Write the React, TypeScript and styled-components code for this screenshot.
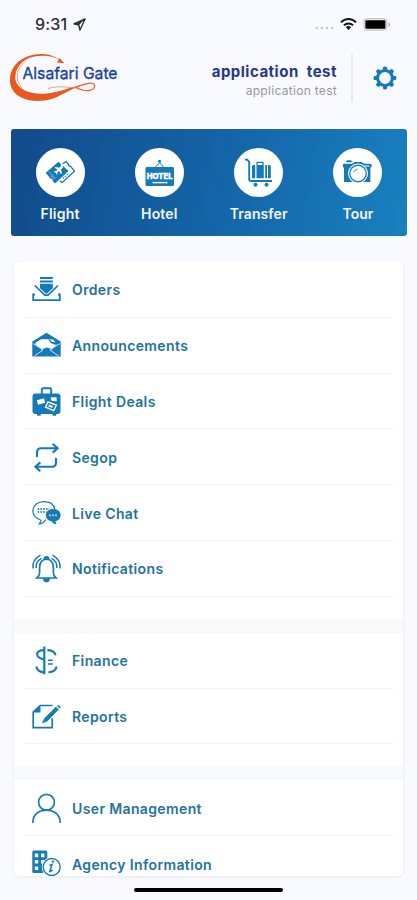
import React from "react";
import styled, { createGlobalStyle } from "styled-components";

const BLUE = "#147ab9";

const GlobalStyle = createGlobalStyle`
  * { box-sizing: border-box; }
  body { margin: 0; background: #f9faff; font-family: Inter, "Liberation Sans", sans-serif; }
`;

const Screen = styled.div`
  width: 417px;
  height: 900px;
  overflow: hidden;
  display: flex;
  flex-direction: column;
  background: #f9faff;
`;

const StatusBar = styled.div`
  height: 48px;
  flex: none;
  display: flex;
  align-items: center;
  justify-content: space-between;
  padding: 0 26px 0 35px;
`;

const Clock = styled.div`
  display: flex;
  align-items: center;
  gap: 6px;
  font-size: 16px;
  font-weight: 450;
  letter-spacing: 0.15px;
  color: #2b2d30;
`;

const StatusIcons = styled.div`
  display: flex;
  align-items: center;
  gap: 6px;
`;

const Header = styled.header`
  height: 80px;
  flex: none;
  display: flex;
  align-items: flex-start;
  padding: 5px 20px 0 9px;
`;

const Account = styled.div`
  flex: 1;
  padding-top: 8px;
  text-align: right;
  white-space: pre;
`;

const AccountName = styled.div`
  font-size: 15px;
  line-height: 21px;
  font-weight: 700;
  letter-spacing: 0.5px;
  color: #25388c;
`;

const AccountRole = styled.div`
  font-size: 12px;
  line-height: 18px;
  letter-spacing: 0.3px;
  color: #96989d;
`;

const HeaderRule = styled.div`
  width: 2px;
  height: 48px;
  margin: 1px 20px 0 14px;
  background: #e9eaee;
`;

const SettingsButton = styled.button`
  border: 0;
  padding: 0;
  margin-top: 13px;
  width: 24px;
  height: 24px;
  background: none;
`;

const Services = styled.nav`
  height: 107px;
  flex: none;
  margin: 1px 10px 0 11px;
  padding-top: 19px;
  display: grid;
  grid-template-columns: repeat(4, 99.3px);
  justify-content: center;
  border-radius: 3px;
  background: linear-gradient(100deg, #124b8b 0%, #1362a5 48%, #1980c0 100%);
`;

const Service = styled.div`
  display: flex;
  flex-direction: column;
  align-items: center;
`;

const ServiceDisc = styled.div`
  width: 49px;
  height: 49px;
  border-radius: 50%;
  background: #fff;
  display: flex;
  align-items: center;
  justify-content: center;
`;

const ServiceLabel = styled.div<{ $spacing: number }>`
  margin-top: 7px;
  font-size: 14px;
  line-height: 20px;
  font-weight: 600;
  letter-spacing: ${(p) => p.$spacing}px;
  color: #f4f8ff;
`;

const MenuList = styled.main`
  height: 614px;
  flex: none;
  margin: 26px 14px 0;
  overflow: hidden;
  border-radius: 3px 3px 6px 6px;
  box-shadow: 0 1px 3px rgba(40, 50, 70, 0.09);
  display: flex;
  flex-direction: column;
  gap: 14px;
  background: #f8f9fc;
`;

const MenuCard = styled.section`
  flex: none;
  padding: 0 10px 22px;
  background: #fff;
`;

const MenuRow = styled.div`
  height: 55.8px;
  padding: 1px 0 0 8px;
  display: flex;
  align-items: center;
  gap: 11px;
  border-bottom: 1px solid #f1f2f4;
`;

const MenuLabel = styled.div`
  padding-top: 1px;
  font-size: 14px;
  line-height: 20px;
  font-weight: 600;
  letter-spacing: 0.37px;
  color: #2472a0;
  white-space: nowrap;
`;

const HomeIndicator = styled.div`
  width: 149px;
  height: 4px;
  flex: none;
  margin: 12px auto 0;
  border-radius: 2px;
  background: #000;
`;

const LogoSvg = styled.svg`
  flex: none;
  overflow: visible;
`;

const LogoName = styled.text`
  font: 16.5px Inter, sans-serif;
  fill: #19429b;
  stroke: #19429b;
  stroke-width: 0.35px;
`;

const HotelSign = styled.text`
  font: 800 8px Inter, sans-serif;
  fill: #fff;
  stroke: #fff;
  stroke-width: 0.4px;
`;

const Logo = () => (
  <LogoSvg width="116" height="50" viewBox="0 0 116 50">
    <path
      d="M51 7C43 0 28-1 17 4C5 9-1 20 1.500 32C5 45 20 49.500 36 47.500C50 45.500 58 37 75 31.500C60 34 52 39 38 40.500C22 42 9 37 6.500 27C5 17 12 8 20 5C30 1.500 43 2 51 7Z"
      fill="#e8591c"
    />
    <path d="M66 35C75 30.500 84 28.500 85.500 32C86.500 36 80 41 67 34.500" fill="none" stroke="#e8662c" strokeWidth="1.300" />
    <path d="M13 35C5 26 8 14 17 8" fill="none" stroke="#f08450" strokeWidth=".7" />
    <path d="M39 35.500C51 32 61 35 70 35" fill="none" stroke="#ee8a5b" strokeWidth=".8" />
    <path d="m50.500 5 5 5.200-7.500-.6z" fill="#e8591c" />
    <LogoName x="13.5" y="26" textLength="95" lengthAdjust="spacingAndGlyphs">
      Alsafari Gate
    </LogoName>
  </LogoSvg>
);

const LocationArrow = () => (
  <svg width="13" height="13" viewBox="0 0 14 14">
    <path d="M13 1 1 6.300l5.200 1.200L7.500 13Z" fill="none" stroke="#2b2d30" strokeWidth="1.500" strokeLinejoin="round" />
    <path d="M1.500 6.300 12 2 6.500 7.500Z" fill="#2b2d30" />
  </svg>
);

const SignalDots = () => (
  <svg width="19" height="16" viewBox="0 0 19 16" fill="#c6c8cd">
    {[1.8, 7, 12, 17.2].map((x) => (
      <circle key={x} cx={x} cy="12" r="1.3" />
    ))}
  </svg>
);

const Wifi = () => (
  <svg width="17" height="14" viewBox="0 0 17 14" fill="none" stroke="#16181b" strokeWidth="2">
    <path d="M1 5.400C5.200 1 11.800 1 16 5.400M3.900 8.400C6.600 5.700 10.400 5.700 13.100 8.400" />
    <path d="m8.500 13-2.700-2.700c1.500-1.600 3.900-1.600 5.400 0Z" fill="#16181b" stroke="none" />
  </svg>
);

const Battery = () => (
  <svg width="28" height="13" viewBox="0 0 28 13">
    <rect x=".9" y=".7" width="23" height="11.600" rx="2.800" fill="#e6e7e9" stroke="#c2c3c5" strokeWidth="1" />
    <rect x="2.400" y="2.200" width="20" height="8.600" rx="1" />
    <path d="M25.500 4.200c2.100.7 2.100 3.900 0 4.600Z" fill="#aaacae" />
  </svg>
);

const Gear = () => (
  <svg width="24" height="24" viewBox="0 0 24 24" fill={BLUE}>
    {[0, 45, 90, 135, 180, 225, 270, 315].map((a) => (
      <path key={a} d="M9.700 5.500 10 1.500Q10.200.6 12 .6t2 .9l.3 4Z" transform={`rotate(${a} 12 12)`} />
    ))}
    <circle cx="12" cy="12" r="7.400" fill="none" stroke={BLUE} strokeWidth="3" />
  </svg>
);

const FlightIcon = () => (
  <svg width="31" height="31" viewBox="0 0 31 31">
    <path d="m17.500 6.800 3.700-2.200 2.300 2.600-.1 1.600 1.700.1 4.500 5.100L17 25.700l-2-1.900" fill="none" stroke={BLUE} strokeWidth="1.300" />
    <path d="m13.500 4.700 2.500 2.600 0 1.700 2 .1 5.500 5L10 26.500l-2.500-2.700.1-2-2-.1-4.900-6Z" fill={BLUE} />
    <path
      d="M17.700 9.200c-.8-.7-1.700-.3-2.500.6l-1.100 1-3.600-.9-.9.8 2.900 1.900-1.600 1.700-1.500-.2-.6.6 1.900 1.100 1.100 1.900.7-.6-.2-1.500 1.800-1.500 1.800 2.900.9-.8-.8-3.700 1.100-1c.8-.8 1.200-1.600.6-2.300Z"
      fill="#fff"
    />
    <path d="m4.200 14.700 6.500 7M6.200 18.800l2.300 2.500" stroke="#d5e7f3" strokeWidth=".9" strokeDasharray="1.500 1" />
    <path d="m18 21.500 6-5.300" stroke={BLUE} strokeWidth="1.100" strokeDasharray="1.500 1" />
  </svg>
);

const HotelIcon = () => (
  <svg width="31" height="31" viewBox="0 0 31 31">
    <path d="m11.500 10 4-4.500 4 4.500" fill="none" stroke={BLUE} strokeWidth="1" />
    <circle cx="15.500" cy="4.200" r="1.500" fill={BLUE} />
    <rect x="1.500" y="10" width="28.500" height="19" rx="1.300" fill={BLUE} />
    <HotelSign x="2.700" y="22.200" textLength="26" lengthAdjust="spacingAndGlyphs">
      HOTEL
    </HotelSign>
    <path d="M8.500 25.600h15" stroke="#fff" strokeWidth="1.400" />
  </svg>
);

const TransferIcon = () => (
  <svg width="31" height="31" viewBox="0 0 31 31">
    <path d="M2 2.600h2.300L6.200 5v17.500q0 1.500 1.500 1.500H29" fill="none" stroke={BLUE} strokeWidth="1.900" />
    <path d="M14 8V5.400h6V8" fill="none" stroke={BLUE} strokeWidth="1.200" />
    <path d="M9 9.500Q9 8 10.500 8h1.700v13.300H9ZM13.500 8h7.300v13.300h-7.300ZM22.200 8h1.800v13.300h-1.800ZM25 8h1q1.800 0 1.800 1.500v11.800H25Z" fill={BLUE} />
    <circle cx="12.500" cy="27.700" r="2" fill={BLUE} />
    <circle cx="23.500" cy="27.700" r="2" fill={BLUE} />
  </svg>
);

const TourIcon = () => (
  <svg width="31" height="31" viewBox="0 0 31 31">
    <path d="M4.500 4.200q0-1 1.300-1h2.500q1.400 0 1.400 1v1H4.500Z" fill={BLUE} />
    <path d="M2 6.800h8.500l2-1.800h7l3 1.800h5.700q1.500 0 1.500 1.500v1.500l-1.300 1V25H2V11L.8 9.500v-2Z" fill={BLUE} />
    <circle cx="16" cy="16.500" r="10" fill="#fff" />
    <circle cx="16" cy="16.500" r="8.900" fill={BLUE} />
    <circle cx="16" cy="16.500" r="7.600" fill="#fff" />
    <path d="M11.500 15.500q1-3 4.200-3.500" fill="none" stroke={BLUE} strokeWidth=".8" />
    <path d="M22.500 9h5" stroke="#fff" strokeWidth="1" />
  </svg>
);

const RowSvg = styled.svg`
  width: 29px;
  height: 29px;
  flex: none;
  overflow: visible;
  fill: none;
  stroke: ${BLUE};
  stroke-width: 1.7px;
`;

const RowIcon = ({ children }: { children: React.ReactNode }) => <RowSvg viewBox="0 0 29 29">{children}</RowSvg>;

const OrdersIcon = () => (
  <RowIcon>
    <path d="M8 3h12.800M8 6.500h12.800" strokeWidth="2" />
    <path d="M8 8.700h12.800v4.500L14.400 19 8 13.200Z" fill={BLUE} stroke="none" />
    <path d="m2.800 10.500 10 9.700h3.200l10-9.700" />
    <path d="M3 19.500H1.200v5.600h26.600v-5.600H26" strokeWidth="1.800" />
  </RowIcon>
);

const AnnouncementsIcon = () => (
  <RowIcon>
    <path d="M.3 12V10.500L14.500 1.800l14.200 8.700V25.500H.3Z" fill={BLUE} stroke="none" />
    <path d="m3.500 11.800 5.500-3.600h7.500l2.200 3.800 4.300 1.800 1.800-.2-5.300 4.400-4.500-1.500L10 18.300 3.500 13.500Z" fill="#fff" stroke="none" />
    <path d="m17.500 8.200 3.500.2 2.500 2.800-3.500-.2Z" fill="#fff" stroke="none" />
    <path d="M1 12.500 11 19l-8.500 6M28 12.500 18 19l8.500 6" stroke="#fff" strokeWidth=".8" />
  </RowIcon>
);

const DealsIcon = () => (
  <RowIcon>
    <path d="M9.800 7V2.700q0-1.500 1.500-1.500h6.400q1.500 0 1.500 1.500V7" strokeWidth="1.900" />
    <rect x=".5" y="6.500" width="28" height="20.500" rx="3" fill={BLUE} stroke="none" />
    <path d="M4.500 26h4.200v2.800H5.300ZM20.500 26h4.200l-.8 2.800h-3.400Z" fill={BLUE} stroke="none" />
    <path d="m4.800 13.200 7.300-2 1 4.500-7 2ZM18.500 10.500l6-.3.300 4-5-.3Z" fill="#fff" stroke="none" />
    <path d="m16 15 8.300 3.200-2.600 5.500-8.200-3.500Z" stroke="#fff" strokeWidth="1.400" />
    <path d="m17 17.500 4 1.600-.8 2-4-1.600Z" fill="#fff" stroke="none" />
  </RowIcon>
);

const SegopIcon = () => (
  <RowIcon>
    <path
      d="M5 14V9.500q0-4.300 4.300-4.300h16M20.700.8l4.900 4.400-4.900 4.400M24 15v4.500q0 4.300-4.300 4.300h-16M8.300 28.200l-4.900-4.400 4.900-4.400"
      strokeWidth="2.100"
    />
  </RowIcon>
);

const ChatIcon = () => (
  <RowIcon>
    <path d="M22.800 10.500C22 5 17.500 2.600 11.800 2.600S.9 6.100.9 11.800c0 4 2.400 7 6 8.500 1.500.6 2 .5 2 1 0 1.500-.8 2.200-1.700 3.500 2.500 0 4.800-1.500 6.600-4.200" strokeWidth="1.200" />
    <path d="M5.500 10h11.800M5.500 13h9" strokeWidth="1.800" strokeDasharray="1.800 1" opacity=".75" />
    <path
      d="M13.900 16c0-3.600 3-6 7.300-6s7.400 2.500 7.400 6.200c0 3.100-2 5.300-5.200 6l1 3.200c-2 0-3.700-1.300-4.900-3.100-3.400-.5-5.600-2.900-5.600-6.300Z"
      fill={BLUE}
      stroke="none"
    />
    <path d="M17 16.300h8.500" stroke="#9dc8e2" strokeWidth="2" strokeDasharray="2 1" />
  </RowIcon>
);

const BellIcon = () => (
  <RowIcon>
    <path d="M5 24h19q-2.600-2.200-2.600-5v-5.800c0-4.600-2.500-8-6.900-8s-6.900 3.400-6.900 8V19q0 2.800-2.600 5Z" />
    <path d="M12.300 5q0-2.200 2.200-2.200T16.700 5ZM12 25.200q.5 2.300 2.500 2.300t2.500-2.300Z" fill={BLUE} />
    <path
      d="M1 14.500C.2 9 2.800 4.200 8.500 1.200M28 14.500c.8-5.500-1.800-10.300-7.500-13.300M4.200 14c-.5-4.500 1.300-7.600 5.200-9.700M24.800 14c.5-4.500-1.300-7.600-5.200-9.700"
      strokeWidth="1.500"
    />
  </RowIcon>
);

const FinanceIcon = () => (
  <RowIcon>
    <path
      d="M12.300.5v27.800M12 4.200C2.500 4.200 3 12 12.300 13.300M4.500 20.500c0 3.400 3.300 5.800 7.500 5.800M15.300 4.200c4.200 0 7.300 1.700 8.300 5M24.500 20.500c0 3.400-3.400 5.800-8 5.800"
      strokeWidth="2.200"
    />
    <path d="M16 14.200h4.800M16 18h4.800" strokeWidth="1.600" />
  </RowIcon>
);

const ReportsIcon = () => (
  <RowIcon>
    <path d="M20.500 3.500H8.200L1.200 10v15.700h19v-9.500" />
    <path d="M8.500 3.200v7.200H1Z" fill={BLUE} stroke="none" />
    <path d="m12.800 16.300 11-11.300 2.500 2.500L15.300 19l-5 1.800Z" fill={BLUE} strokeWidth=".7" />
    <path d="m25 3.900 1.200-1.200 2.600 2.700-1.300 1.200Z" fill={BLUE} stroke="none" />
  </RowIcon>
);

const UserIcon = () => (
  <RowIcon>
    <circle cx="14.500" cy="8.200" r="7.900" />
    <path d="M.9 29v-1C.9 21 6.500 16.100 14.500 16.100S28.100 21 28.100 28v1" />
  </RowIcon>
);

const AgencyIcon = () => (
  <RowIcon>
    <path d="M.3 2q0-1.500 1.500-1.500h12q1.500 0 1.500 1.500v8L11 16v7H1.800q-1.500 0-1.500-1.500Z" fill={BLUE} stroke="none" />
    <path d="M2.800 3.600h3.500v3.600H2.800ZM9 3.600h3.500v3.600H9ZM2.800 10h3.500v3.600H2.800ZM9 10h3.500v3.600H9ZM2.800 16.400h3.500V20H2.800Z" fill="#fff" stroke="none" />
    <circle cx="19.700" cy="17" r="9.500" fill="#fff" stroke="#fff" strokeWidth="1" />
    <circle cx="19.700" cy="17" r="8.500" strokeWidth="1.400" />
    <path d="m17.500 15.500 2.400-1-2 7 2.800-1.300" strokeWidth="1.500" />
    <circle cx="21" cy="11.600" r="1.200" fill={BLUE} stroke="none" />
  </RowIcon>
);

const services = [
  { label: "Flight", icon: <FlightIcon />, spacing: 0.2 },
  { label: "Hotel", icon: <HotelIcon />, spacing: 0.15 },
  { label: "Transfer", icon: <TransferIcon />, spacing: 0.1 },
  { label: "Tour", icon: <TourIcon />, spacing: 0 },
];

const groups = [
  [
    { label: "Orders", icon: <OrdersIcon /> },
    { label: "Announcements", icon: <AnnouncementsIcon /> },
    { label: "Flight Deals", icon: <DealsIcon /> },
    { label: "Segop", icon: <SegopIcon /> },
    { label: "Live Chat", icon: <ChatIcon /> },
    { label: "Notifications", icon: <BellIcon /> },
  ],
  [
    { label: "Finance", icon: <FinanceIcon /> },
    { label: "Reports", icon: <ReportsIcon /> },
  ],
  [
    { label: "User Management", icon: <UserIcon /> },
    { label: "Agency Information", icon: <AgencyIcon /> },
  ],
];

export default function App() {
  return (
    <>
      <GlobalStyle />
      <Screen>
        <StatusBar>
          <Clock>
            9:31
            <LocationArrow />
          </Clock>
          <StatusIcons>
            <SignalDots />
            <Wifi />
            <Battery />
          </StatusIcons>
        </StatusBar>
        <Header>
          <Logo />
          <Account>
            <AccountName>application  test</AccountName>
            <AccountRole>application test</AccountRole>
          </Account>
          <HeaderRule />
          <SettingsButton aria-label="Settings">
            <Gear />
          </SettingsButton>
        </Header>
        <Services>
          {services.map((s) => (
            <Service key={s.label}>
              <ServiceDisc>{s.icon}</ServiceDisc>
              <ServiceLabel $spacing={s.spacing}>{s.label}</ServiceLabel>
            </Service>
          ))}
        </Services>
        <MenuList>
          {groups.map((items) => (
            <MenuCard key={items[0].label}>
              {items.map((item) => (
                <MenuRow key={item.label}>
                  {item.icon}
                  <MenuLabel>{item.label}</MenuLabel>
                </MenuRow>
              ))}
            </MenuCard>
          ))}
        </MenuList>
        <HomeIndicator />
      </Screen>
    </>
  );
}
